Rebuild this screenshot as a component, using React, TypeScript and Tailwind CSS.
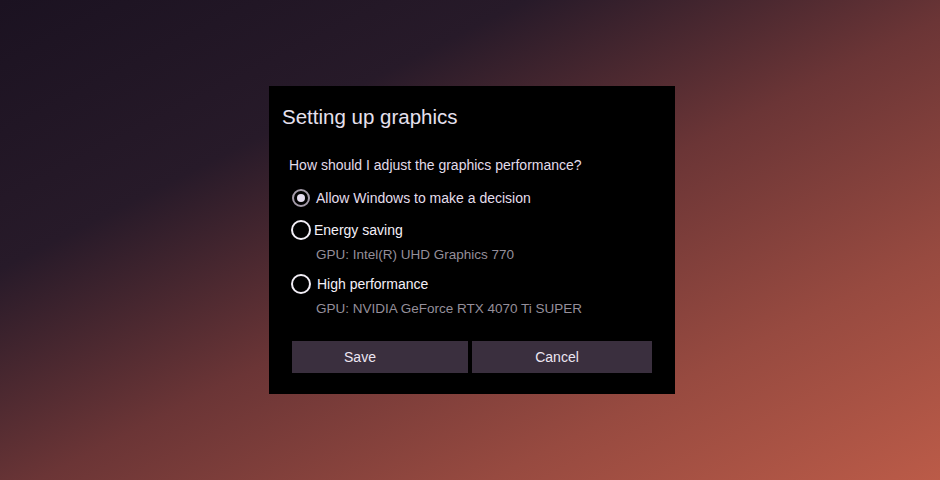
import { useState } from 'react';

interface GpuOption {
  id: string;
  label: string;
  gpu?: string;
}

const options: GpuOption[] = [
  { id: 'auto', label: 'Allow Windows to make a decision' },
  { id: 'saving', label: 'Energy saving', gpu: 'GPU: Intel(R) UHD Graphics 770' },
  { id: 'high', label: 'High performance', gpu: 'GPU: NVIDIA GeForce RTX 4070 Ti SUPER' },
];

function Radio({ checked }: { checked: boolean }) {
  if (checked) {
    return (
      <span className="flex h-[18px] w-[18px] shrink-0 items-center justify-center rounded-full border-2 border-[#a39aa8]">
        <span className="h-[8px] w-[8px] rounded-full bg-[#e4dcee]" />
      </span>
    );
  }
  return <span className="h-[20px] w-[20px] shrink-0 rounded-full border-2 border-[#f2eef6]" />;
}

export default function App() {
  const [selected, setSelected] = useState('auto');

  return (
    <div className="flex h-[480px] w-[940px] items-start justify-center bg-[linear-gradient(to_bottom_right,#1b1221_0%,#271a29_28%,#6b3536_52%,#974a40_76%,#bb5b48_100%)] pt-[86px] font-['Liberation_Sans',Arial,sans-serif]">
      <div className="ml-[4px] flex w-[406px] flex-col bg-black pb-[21px] pl-[13px] pr-[23px] pt-[18px]">
        <h1 className="text-[20.5px] leading-[26px] text-[#e6e0ee]">Setting up graphics</h1>

        <p className="mt-[26px] pl-[7px] text-[14px] leading-[18px] text-[#e2dcea]">
          How should I adjust the graphics performance?
        </p>

        <div className="mt-[8px] flex flex-col pl-[9px]">
          {options.map((opt) => (
            <div key={opt.id} className="flex flex-col">
              <button
                type="button"
                onClick={() => setSelected(opt.id)}
                className={`flex h-[32px] items-center text-left text-[14px] ${
                  opt.id === 'auto' ? 'gap-[6px] pl-[1px]' : opt.id === 'saving' ? 'gap-[3px]' : 'gap-[6px]'
                } ${opt.id === 'auto' ? 'text-[#e4deec]' : 'text-[#f4f0f8]'}`}
              >
                <Radio checked={selected === opt.id} />
                <span>{opt.label}</span>
              </button>
              {opt.gpu && (
                <span className="h-[22px] pl-[25px] text-[13.5px] leading-[18px] text-[#958f9a]">{opt.gpu}</span>
              )}
            </div>
          ))}
        </div>

        <div className="mt-[19px] flex gap-[4px] pl-[10px]">
          <button type="button" className="h-[32px] w-[176px] bg-[#3a2f3e] pr-[40px] text-[14px] text-[#ece6f2]">
            Save
          </button>
          <button type="button" className="h-[32px] w-[180px] bg-[#3a2f3e] pr-[10px] text-[14px] text-[#ece6f2]">
            Cancel
          </button>
        </div>
      </div>
    </div>
  );
}
